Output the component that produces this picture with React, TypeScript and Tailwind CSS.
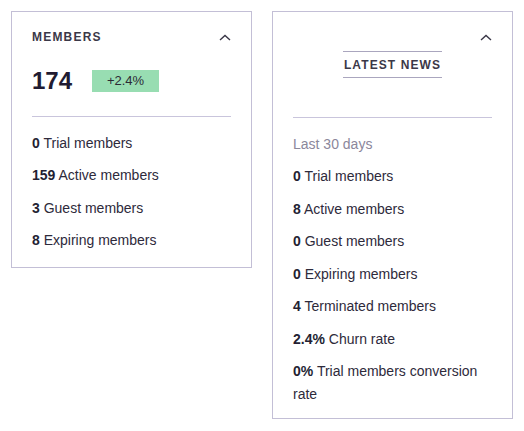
const members = [
  { n: "0", label: "Trial members" },
  { n: "159", label: "Active members" },
  { n: "3", label: "Guest members" },
  { n: "8", label: "Expiring members" },
];

const news = [
  { n: "0", label: "Trial members" },
  { n: "8", label: "Active members" },
  { n: "0", label: "Guest members" },
  { n: "0", label: "Expiring members" },
  { n: "4", label: "Terminated members" },
  { n: "2.4%", label: "Churn rate" },
  { n: "0%", label: "Trial members conversion rate" },
];

function Chevron() {
  return (
    <svg width="12" height="7" viewBox="0 0 12 7" fill="none">
      <path d="M1 6L6 1.5L11 6" stroke="#3a3747" strokeWidth="1.4" />
    </svg>
  );
}

function Stat({ n, label }: { n: string; label: string }) {
  return (
    <li>
      <span className="font-bold text-[#241f33]">{n}</span> {label}
    </li>
  );
}

export default function App() {
  return (
    <div
      className="flex items-start gap-[20px] p-[11px] bg-white text-[#2e2a3b]"
      style={{ fontFamily: '"Liberation Sans", Arial, sans-serif' }}
    >
      <div className="w-[242px] border border-[#c3bfd6] px-[20px] pt-[17px] pb-[15px]">
        <div className="flex items-center justify-between h-[16px]">
          <h2 className="text-[12px] font-bold tracking-[1.2px] text-[#3b3848] leading-[16px]">
            MEMBERS
          </h2>
          <Chevron />
        </div>

        <div className="flex items-center gap-[20px] mt-[25px] h-[22px]">
          <span className="text-[24px] font-bold text-[#211b31] leading-none">174</span>
          <span className="w-[67px] h-[22px] bg-[#98ddb2] text-[13px] text-[#2b2a35] flex items-center justify-center">
            +2.4%
          </span>
        </div>

        <div className="border-t border-[#c9c5dc] mt-[24px]" />

        <ul className="flex flex-col gap-[9.5px] mt-[14.5px] text-[14px] leading-[23px]">
          {members.map((m) => (
            <Stat key={m.label} {...m} />
          ))}
        </ul>
      </div>

      <div className="w-[242px] border border-[#c3bfd6] px-[20px] pt-[17px] pb-[12px]">
        <div className="flex items-center justify-end h-[16px]">
          <Chevron />
        </div>

        <div className="flex justify-center mt-[6px]">
          <h2 className="border-y border-[#aaa6be] pt-[5px] pb-[4px] px-[1px] text-[12px] font-bold tracking-[1.1px] text-[#3b3848] leading-[16px]">
            LATEST NEWS
          </h2>
        </div>

        <div className="border-t border-[#c9c5dc] mt-[39px]" />

        <ul className="flex flex-col gap-[9.5px] mt-[14.5px] text-[14px] leading-[23px]">
          <li className="text-[#8b879b]">Last 30 days</li>
          {news.map((m) => (
            <Stat key={m.label} {...m} />
          ))}
        </ul>
      </div>
    </div>
  );
}
